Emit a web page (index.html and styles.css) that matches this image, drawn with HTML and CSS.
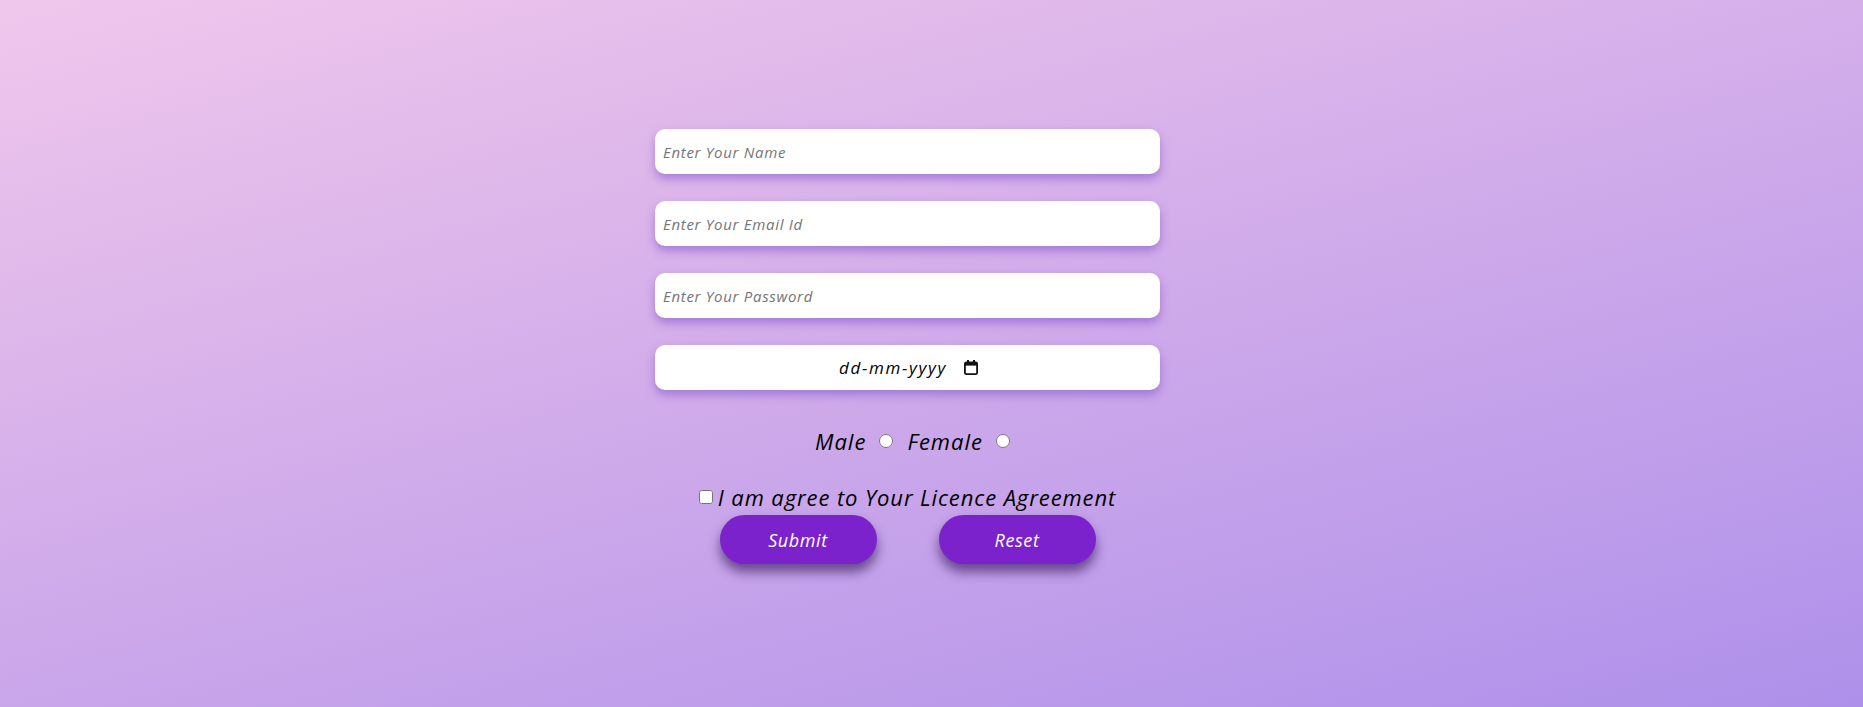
FILE: index.html
```html
<!DOCTYPE html>
<html lang="en">
<head>
<meta charset="utf-8">
<title>Registration Form</title>
<link rel="stylesheet" href="styles.css">
</head>
<body>
<div class="page">
  <form class="form">
    <input class="field" type="text" placeholder="Enter Your Name">
    <input class="field" type="email" placeholder="Enter Your Email Id">
    <input class="field" type="password" placeholder="Enter Your Password">
    <div class="field date">
      <span class="date-text">dd-mm-yyyy</span>
      <svg class="cal" width="14" height="15" viewBox="0 0 14 15" aria-hidden="true">
        <rect x="3" y="0" width="2" height="3" fill="#111"/>
        <rect x="9" y="0" width="2" height="3" fill="#111"/>
        <rect x="0.9" y="2.4" width="12.2" height="11.7" rx="1.4" fill="none" stroke="#111" stroke-width="1.8"/>
        <rect x="1" y="2.4" width="12" height="3.2" fill="#111"/>
      </svg>
    </div>
    <div class="gender">
      <label class="opt">Male <input type="radio" name="g"></label>
      <label class="opt">Female <input type="radio" name="g"></label>
    </div>
    <label class="agree"><input type="checkbox"> I am agree to Your Licence Agreement</label>
    <div class="buttons">
      <button type="button" class="btn">Submit</button>
      <button type="reset" class="btn">Reset</button>
    </div>
  </form>
</div>
</body>
</html>
```
FILE: styles.css
```css
html, body {
  margin: 0;
  height: 100%;
}
body {
  background: linear-gradient(165deg, #f0c7ec 0%, #d6b0ea 40%, #ae90ea 100%);
  font-family: "Open Sans", Lato, sans-serif;
  font-style: italic;
}
.page {
  display: flex;
  justify-content: center;
  padding-top: 129px;
  padding-right: 48px;
}
.form {
  width: 505px;
  display: flex;
  flex-direction: column;
  align-items: center;
}
.field {
  box-sizing: border-box;
  width: 505px;
  height: 45px;
  margin: 0 0 27px 0;
  border: none;
  border-radius: 10px;
  background: #fff;
  padding: 0 8px;
  font-family: "Open Sans", sans-serif;
  font-style: italic;
  font-size: 15px;
  letter-spacing: 0.7px;
  color: #000;
  box-shadow: 0 5px 10px rgba(130, 80, 200, 0.55);
  outline: none;
}
.field::placeholder {
  color: #757575;
}
.date {
  margin-bottom: 0;
  display: flex;
  align-items: center;
  justify-content: center;
  gap: 17px;
  padding-left: 10px;
}
.date-text {
  font-size: 17px;
  letter-spacing: 1.7px;
  color: #000;
}
.cal {
  display: block;
  margin-top: -1px;
}
.gender {
  margin-top: 36px;
  padding-left: 10px;
  font-size: 22px;
  line-height: 30px;
  letter-spacing: 1px;
  display: flex;
  gap: 14px;
  align-items: center;
}
.opt {
  display: flex;
  align-items: center;
  gap: 13px;
}
.opt input {
  margin: 0;
  width: 14px;
  height: 14px;
}
.agree {
  margin-top: 27px;
  font-size: 22px;
  line-height: 28px;
  letter-spacing: 0.9px;
  display: flex;
  align-items: center;
  gap: 5px;
}
.agree input {
  margin: 0;
  width: 14px;
  height: 14px;
}
.buttons {
  margin-top: 4px;
  display: flex;
  gap: 62px;
}
.btn {
  width: 157px;
  height: 49px;
  border: none;
  border-radius: 25px;
  background: #7b22cc;
  color: #fff;
  font-family: "Open Sans", sans-serif;
  font-style: italic;
  font-size: 18px;
  letter-spacing: 0.6px;
  box-shadow: 0 8px 12px rgba(40, 10, 80, 0.6);
}
```
